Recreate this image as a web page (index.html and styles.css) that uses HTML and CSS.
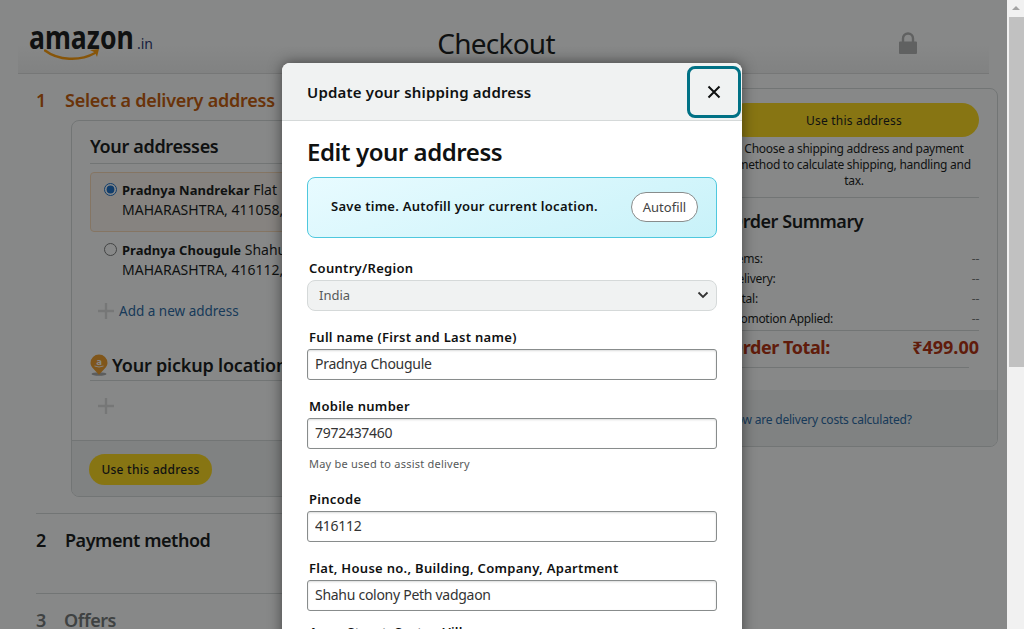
FILE: index.html
```html
<!DOCTYPE html>
<html lang="en">
<head>
  <meta charset="UTF-8">
  <title>Checkout</title>
  <link rel="stylesheet" href="styles.css">
</head>
<body>

  <div class="page">
    <header class="top-bar">
      <div class="logo">
        <span class="logo-word">amazon</span><span class="logo-in">.in</span>
        <svg class="logo-smile" width="58" height="14" viewBox="0 0 58 14">
          <path d="M1 1.500 C14 11.500 36 12.500 51 4" fill="none" stroke="#ff9900" stroke-width="2.400" stroke-linecap="round"/>
          <path d="M46 1 L55 0 L53 8 L51 3.500 Z" fill="#ff9900"/>
        </svg>
      </div>
      <h1 class="top-title">Checkout</h1>
      <svg class="lock" width="18" height="22" viewBox="0 0 18 22">
        <path d="M1 9.500 h16 a1 1 0 0 1 1 1 V21 a1 1 0 0 1 -1 1 H1 a1 1 0 0 1 -1 -1 V10.500 a1 1 0 0 1 1 -1 Z" fill="#b0b0b0"/>
        <path d="M4 10 V6.500 a5 5 0 0 1 10 0 V10" fill="none" stroke="#b0b0b0" stroke-width="2.400"/>
      </svg>
    </header>

    <div class="columns">
      <main class="steps">
        <div class="step-head active"><span class="step-num">1</span><h3>Select a delivery address</h3></div>

        <section class="address-box">
          <div class="address-inner">
            <h4 class="box-title">Your addresses</h4>
            <label class="address-row selected">
              <input type="radio" name="addr" checked>
              <span class="address-text"><b>Pradnya Nandrekar</b> Flat<br>MAHARASHTRA, 411058,</span>
            </label>
            <label class="address-row">
              <input type="radio" name="addr">
              <span class="address-text"><b>Pradnya Chougule</b> Shahu<br>MAHARASHTRA, 416112,</span>
            </label>
            <div class="add-row">
              <svg class="plus" width="16" height="16" viewBox="0 0 16 16"><path d="M8 0 V16 M0 8 H16" stroke="#dcdcdc" stroke-width="2.400"/></svg>
              <a href="#">Add a new address</a>
            </div>

            <h4 class="box-title pickup">
              <svg width="18" height="22" viewBox="0 0 18 22">
                <ellipse cx="9" cy="20" rx="7.500" ry="1.800" fill="#a8a8a8"/>
                <path d="M9 0.500 a8.500 8.500 0 0 1 8.500 8.500 c0 4.500 -5 7 -8.500 12 c-3.500 -5 -8.500 -7.500 -8.500 -12 a8.500 8.500 0 0 1 8.500 -8.500 Z" fill="#f09a22"/>
                <text x="9" y="10.500" class="pin-a">a</text>
                <path d="M4.500 12 q4.500 2 9 0" fill="none" stroke="#fff" stroke-width="0.900"/>
              </svg>
              Your pickup location
            </h4>
            <div class="add-row empty">
              <svg class="plus" width="16" height="16" viewBox="0 0 16 16"><path d="M8 0 V16 M0 8 H16" stroke="#dcdcdc" stroke-width="2.400"/></svg>
            </div>
          </div>
          <div class="address-foot"><button class="yellow-btn small">Use this address</button></div>
        </section>

        <div class="step-head closed"><span class="step-num">2</span><h3>Payment method</h3></div>
        <div class="step-head closed muted"><span class="step-num">3</span><h3>Offers</h3></div>
      </main>

      <aside class="summary">
        <div class="summary-inner">
          <button class="yellow-btn wide">Use this address</button>
          <p class="summary-note">Choose a shipping address and payment method to calculate shipping, handling and tax.</p>
          <h3 class="summary-title">Order Summary</h3>
          <div class="summary-row"><span>Items:</span><span class="dash">--</span></div>
          <div class="summary-row"><span>Delivery:</span><span class="dash">--</span></div>
          <div class="summary-row"><span>Total:</span><span class="dash">--</span></div>
          <div class="summary-row"><span>Promotion Applied:</span><span class="dash">--</span></div>
          <div class="summary-total"><span class="total-label">Order Total:</span><span>₹499.00</span></div>
        </div>
        <div class="summary-foot"><a href="#">How are delivery costs calculated?</a></div>
      </aside>
    </div>

    <div class="overlay"></div>

    <div class="modal">
      <div class="modal-head">
        <span>Update your shipping address</span>
        <button class="close-btn" aria-label="Close">
          <svg width="14" height="14" viewBox="0 0 14 14"><path d="M1.500 1.500 L12.500 12.500 M12.500 1.500 L1.500 12.500" stroke="#0f1111" stroke-width="2" fill="none"/></svg>
        </button>
      </div>
      <div class="modal-body">
        <h2>Edit your address</h2>
        <div class="autofill">
          <span>Save time. Autofill your current location.</span>
          <button class="autofill-btn">Autofill</button>
        </div>

        <label class="field-label first">Country/Region</label>
        <div class="select-wrap">
          <select class="country"><option>India</option></select>
          <svg class="chevron" width="12" height="8" viewBox="0 0 12 8"><path d="M1.500 1.500 L6 6 L10.500 1.500" fill="none" stroke="#333" stroke-width="1.800"/></svg>
        </div>

        <label class="field-label">Full name (First and Last name)</label>
        <input class="field" type="text" value="Pradnya Chougule">

        <label class="field-label">Mobile number</label>
        <input class="field" type="text" value="7972437460">
        <div class="hint">May be used to assist delivery</div>

        <label class="field-label after-hint">Pincode</label>
        <input class="field" type="text" value="416112">

        <label class="field-label">Flat, House no., Building, Company, Apartment</label>
        <input class="field" type="text" value="Shahu colony Peth vadgaon">

        <label class="field-label last">Area, Street, Sector, Village</label>
      </div>
    </div>
  </div>

  <div class="scrollbar">
    <div class="scroll-arrow"></div>
    <div class="scroll-thumb"></div>
  </div>

</body>
</html>
```

FILE: styles.css
```css
* {
  box-sizing: border-box;
}

html, body {
  margin: 0;
  height: 100%;
  overflow: hidden;
}

body {
  display: flex;
  font-family: "Noto Sans", Arial, sans-serif;
  color: #0f1111;
  font-size: 14px;
  background: #fff;
}

h1, h2, h3, h4, p {
  margin: 0;
}

a {
  color: #2162a1;
  text-decoration: none;
}

.page {
  position: relative;
  width: 1007px;
  height: 629px;
  overflow: hidden;
  flex-shrink: 0;
}

/* top bar */
.top-bar {
  position: relative;
  margin: 0 18px;
  height: 74px;
  padding-top: 12px;
  display: grid;
  grid-template-columns: 1fr auto 1fr;
  align-items: center;
  border-bottom: 1px solid #ddd;
  background: linear-gradient(to bottom, #fff 60%, #f2f2f2);
}

.logo {
  position: relative;
  margin-left: 11px;
  height: 40px;
  margin-bottom: 11px;
  white-space: nowrap;
  color: #111;
}

.logo-word {
  display: inline-block;
  width: 105px;
  font-size: 33px;
  font-weight: 700;
  line-height: 40px;
  transform: scaleX(0.806);
  transform-origin: left center;
}

.logo-in {
  margin-left: 3px;
  font-size: 14px;
  color: #232f6b;
}

.logo-smile {
  position: absolute;
  left: 15px;
  top: 32px;
}

.top-title {
  font-size: 28px;
  font-weight: 400;
  margin-right: 15px;
  letter-spacing: -0.75px;
}

.lock {
  justify-self: end;
  margin-right: 72px;
}

.columns {
  display: flex;
  justify-content: space-between;
  padding: 14px 9px 0 36px;
}

/* left column */
.steps {
  width: 640px;
  flex-shrink: 0;
}

.step-head {
  display: flex;
  align-items: center;
  gap: 20px;
  font-size: 18px;
  line-height: 24px;
  font-weight: 600;
  letter-spacing: -0.45px;
}

.step-head h3 {
  font-size: 18px;
  font-weight: 600;
}

.step-head.active {
  color: #c45500;
  letter-spacing: -0.24px;
}

.step-head.closed {
  border-top: 1px solid #d5d9d9;
  height: 80px;
  align-items: flex-start;
  padding-top: 14px;
}

.step-head.muted {
  color: #6f7373;
  gap: 19px;
}

.step-num {
  width: 9px;
}

.address-box {
  margin: 8px 0 16px 35px;
  border: 1px solid #d5d9d9;
  border-radius: 8px;
  height: 377px;
  display: flex;
  flex-direction: column;
  overflow: hidden;
}

.address-inner {
  flex: 1;
  padding: 13px 18px 0;
}

.box-title {
  font-size: 18px;
  line-height: 24px;
  font-weight: 600;
  letter-spacing: -0.35px;
  padding-bottom: 5px;
  border-bottom: 1px solid #d5d9d9;
  margin-bottom: 8px;
}

.address-row {
  display: flex;
  gap: 5px;
  padding: 7px 12px;
  height: 60px;
  font-size: 14px;
  line-height: 20px;
  white-space: nowrap;
  border: 1px solid transparent;
  border-radius: 4px;
}

.address-row.selected {
  background: #fcf5ee;
  border-color: #fbd8b4;
}

.address-row input {
  margin: 3px 0 0 1px;
  width: 13px;
  height: 13px;
  accent-color: #1268c4;
}

.address-text b {
  font-size: 13px;
  font-weight: 700;
  letter-spacing: 0.05px;
}

.add-row {
  display: flex;
  align-items: center;
  gap: 5px;
  padding-left: 8px;
  height: 24px;
  margin-top: 7px;
  font-size: 13.5px;
}

.add-row.empty {
  margin-top: 4px;
}

.plus {
  flex-shrink: 0;
}

.box-title.pickup {
  display: flex;
  align-items: center;
  gap: 4px;
  margin-top: 30px;
  padding-bottom: 3px;
  margin-bottom: 13px;
  letter-spacing: -0.2px;
}

.pin-a {
  font-size: 9.5px;
  font-weight: 700;
  fill: #fff;
  text-anchor: middle;
  letter-spacing: 0;
}

.address-foot {
  height: 56px;
  background: #f0f2f2;
  border-top: 1px solid #d5d9d9;
  padding: 13px 17px;
}

.yellow-btn {
  background: #ffd814;
  border: none;
  border-radius: 100px;
  font-family: inherit;
  color: #0f1111;
}

.yellow-btn.small {
  height: 31px;
  width: 123px;
  font-size: 12px;
  font-weight: 500;
  letter-spacing: 0.25px;
  padding: 0;
}

/* right column */
.summary {
  width: 288px;
  height: 359px;
  border: 1px solid #d5d9d9;
  border-radius: 8px;
  overflow: hidden;
  display: flex;
  flex-direction: column;
}

.summary-inner {
  flex: 1;
  padding: 14px 18px 0;
}

.yellow-btn.wide {
  width: 100%;
  height: 34px;
  font-size: 12px;
  letter-spacing: 0.2px;
}

.summary-note {
  font-size: 12px;
  line-height: 16px;
  letter-spacing: -0.27px;
  text-align: center;
  padding: 4px 0 8px;
  border-bottom: 1px solid #d5d9d9;
}

.summary-title {
  font-size: 18px;
  line-height: 24px;
  font-weight: 600;
  letter-spacing: -0.45px;
  margin: 11px 0 16px;
}

.summary-row {
  display: flex;
  justify-content: space-between;
  font-size: 12px;
  line-height: 20px;
  letter-spacing: -0.27px;
}

.dash {
  color: #6f7373;
}

.summary-total {
  display: flex;
  justify-content: space-between;
  margin-top: 1px;
  padding: 4px 0 9px;
  border-top: 1px solid #d5d9d9;
  font-size: 18px;
  line-height: 24px;
  font-weight: 700;
  color: #b12704;
  position: relative;
}

.total-label {
  letter-spacing: -0.45px;
}

.summary-total::after {
  content: "";
  position: absolute;
  left: 0;
  right: 10px;
  bottom: 0;
  border-bottom: 1px solid #d5d9d9;
}

.summary-foot {
  height: 56px;
  background: #f0f2f2;
  padding: 21px 16px 0;
  font-size: 12px;
  line-height: 18px;
  letter-spacing: -0.2px;
}

/* dim + dialog */
.overlay {
  position: absolute;
  inset: 0;
  background: rgba(15, 17, 17, 0.5);
}

.modal {
  position: absolute;
  left: 282px;
  top: 63px;
  width: 460px;
  height: 700px;
  background: #fff;
  border-radius: 8px;
  box-shadow: 0 0 14px rgba(0, 0, 0, 0.5);
}

.modal-head {
  display: flex;
  justify-content: space-between;
  align-items: center;
  height: 58px;
  padding: 0 1px 0 25px;
  background: #f0f2f2;
  border-bottom: 1px solid #d5d9d9;
  border-radius: 8px 8px 0 0;
  font-size: 15px;
  font-weight: 600;
  letter-spacing: 0.18px;
}

.close-btn {
  width: 54px;
  height: 52px;
  border: 3px solid #007185;
  border-radius: 8px;
  background: none;
  padding: 0;
  display: flex;
  align-items: center;
  justify-content: center;
}

.modal-body {
  padding: 15px 25px 0;
}

.modal-body h2 {
  font-size: 24px;
  line-height: 32px;
  font-weight: 600;
  letter-spacing: -0.45px;
}

.autofill {
  display: flex;
  justify-content: space-between;
  align-items: center;
  height: 61px;
  margin-top: 9px;
  padding: 0 18px 4px 23px;
  border: 1px solid #4fc8de;
  border-radius: 8px;
  background: linear-gradient(160deg, #e8fbff, #c8f2f9);
  font-size: 13px;
  font-weight: 600;
  letter-spacing: 0.26px;
}

.autofill-btn {
  width: 67px;
  height: 30px;
  margin-top: 3px;
  border: 1px solid #888c8c;
  border-radius: 100px;
  background: #fff;
  padding: 0;
  font-family: inherit;
  font-size: 13px;
  color: #444;
}

.field-label {
  display: block;
  padding-left: 2px;
  margin-top: 17px;
  font-size: 13px;
  line-height: 18px;
  font-weight: 600;
  letter-spacing: 0.3px;
}

.field-label.first {
  margin-top: 21px;
}

.field-label.after-hint {
  margin-top: 18px;
}

.field-label.last {
  margin-top: 12px;
}

.select-wrap {
  position: relative;
  margin-top: 3px;
}

.country {
  width: 100%;
  height: 31px;
  appearance: none;
  border: 1px solid #d5d9d9;
  border-radius: 8px;
  background: #f0f2f2;
  padding: 0 11px 2px;
  font-family: inherit;
  font-size: 13px;
  color: #565959;
}

.chevron {
  position: absolute;
  right: 8px;
  top: 11px;
}

.field {
  display: block;
  width: 100%;
  height: 31px;
  margin-top: 3px;
  padding: 0 7px 2px;
  border: 1px solid #888c8c;
  border-radius: 3px;
  box-shadow: 0 1px 2px rgba(15, 17, 17, 0.15) inset;
  font-family: inherit;
  font-size: 14px;
  letter-spacing: -0.28px;
  color: #333;
}

.hint {
  padding-left: 2px;
  margin-top: 7px;
  font-size: 11px;
  line-height: 16px;
  letter-spacing: 0.23px;
  color: #565959;
}

/* window scrollbar */
.scrollbar {
  width: 17px;
  height: 629px;
  background: #f1f1f1;
  padding-left: 2px;
  flex-shrink: 0;
}

.scroll-arrow {
  height: 17px;
  position: relative;
}

.scroll-arrow::before {
  content: "";
  position: absolute;
  left: 3px;
  top: 6px;
  border-left: 4px solid transparent;
  border-right: 4px solid transparent;
  border-bottom: 4px solid #a3a3a3;
}

.scroll-thumb {
  height: 350px;
  background: #c1c1c1;
}
```
